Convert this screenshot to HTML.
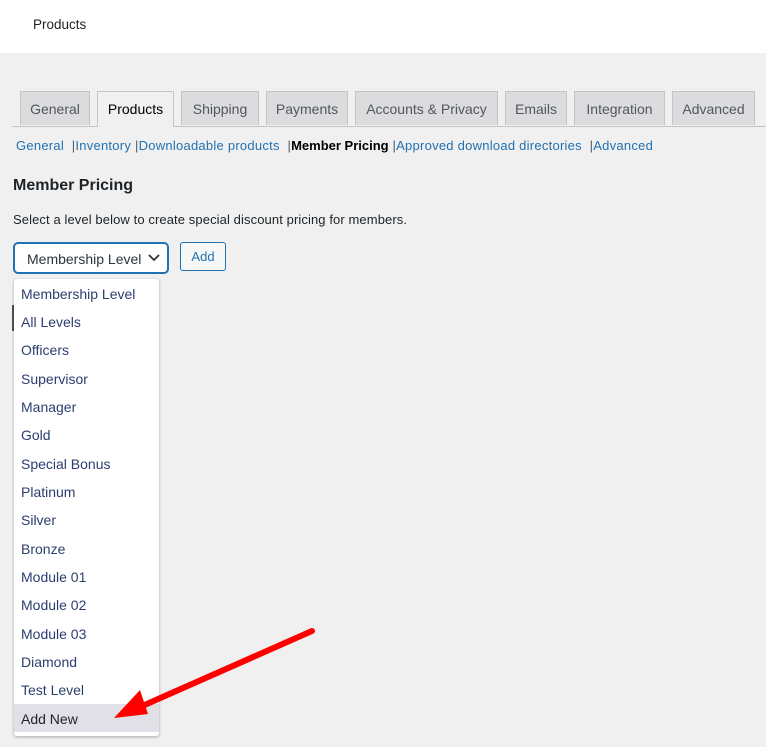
<!DOCTYPE html>
<html><head><style>
body{margin:0;width:766px;height:747px;background:#f0f0f1;font-family:"Liberation Sans",sans-serif;font-size:13px;color:#1d2327;position:relative;overflow:hidden}
.hdr{position:absolute;left:0;top:0;width:766px;height:53px;background:#fff}
.hdr span{position:absolute;left:33px;top:17px;font-size:13.5px}
.tabline{position:absolute;left:12px;right:0;top:126px;height:1px;background:#c3c4c7}
.tab{position:absolute;top:91px;height:34px;background:#dcdcde;border:1px solid #c3c4c7;border-bottom:none;box-sizing:border-box;font-size:14px;color:#50575e;text-align:center;line-height:34px}
.tab.a{background:#f0f0f1;color:#000;height:36px}
.sub{position:absolute;top:138px;left:16px;font-size:13px;color:#2271b1;white-space:nowrap;letter-spacing:0.25px}
.sub b{color:#000;letter-spacing:0}
.sub i{font-style:normal;color:#50575e}
h2{position:absolute;left:13px;top:177px;margin:0;font-size:16px;font-weight:bold}
.desc{position:absolute;left:13px;top:212px;letter-spacing:0.1px}
.sel{position:absolute;left:14px;top:243px;width:154px;height:30px;box-sizing:border-box;border:1px solid #2271b1;border-radius:4px;box-shadow:0 0 0 1px #2271b1;background:#fff;color:#2c3338;font-size:14px;line-height:30px;padding-left:12px}
.sel svg{position:absolute;right:7px;top:10px}
.btn{position:absolute;left:180px;top:242px;width:46px;height:29px;box-sizing:border-box;border:1px solid #2271b1;border-radius:3px;color:#2271b1;font-size:13px;text-align:center;line-height:27px;background:#f6f7f7}
.list{position:absolute;left:14px;top:279px;width:145px;height:457px;background:#fff;border-radius:3px;box-shadow:0 1px 3px rgba(0,0,0,.3)}
.it{position:absolute;left:7px;font-size:14px;color:#2c3e6e}
.hl{position:absolute;left:0;top:425px;width:145px;height:28px;background:#e0e0e6}
</style></head><body>
<div class="hdr"><span>Products</span></div>
<div class="tabline"></div>
<div class="tab" style="left:20px;width:70px">General</div>
<div class="tab a" style="left:97px;width:77px">Products</div>
<div class="tab" style="left:181px;width:78px">Shipping</div>
<div class="tab" style="left:266px;width:82px">Payments</div>
<div class="tab" style="left:355px;width:143px">Accounts &amp; Privacy</div>
<div class="tab" style="left:505px;width:62px">Emails</div>
<div class="tab" style="left:574px;width:91px">Integration</div>
<div class="tab" style="left:672px;width:83px">Advanced</div>
<div class="sub">General &nbsp;<i>|</i>Inventory <i>|</i>Downloadable products &nbsp;<i>|</i><b>Member Pricing</b> <i>|</i>Approved download directories &nbsp;<i>|</i>Advanced</div>
<h2>Member Pricing</h2>
<div class="desc">Select a level below to create special discount pricing for members.</div>
<div class="sel">Membership Level<svg width="12" height="8" viewBox="0 0 12 8"><path d="M1 1l5 5 5-5" fill="none" stroke="#2c3338" stroke-width="1.8"/></svg></div>
<div class="btn">Add</div>
<div style="position:absolute;left:12px;top:305px;width:2px;height:26px;background:#50575e"></div>
<div class="list">
<div class="hl"></div>
<div class="it" style="top:7px">Membership Level</div>
<div class="it" style="top:35px">All Levels</div>
<div class="it" style="top:63px">Officers</div>
<div class="it" style="top:92px">Supervisor</div>
<div class="it" style="top:120px">Manager</div>
<div class="it" style="top:148px">Gold</div>
<div class="it" style="top:177px">Special Bonus</div>
<div class="it" style="top:205px">Platinum</div>
<div class="it" style="top:233px">Silver</div>
<div class="it" style="top:262px">Bronze</div>
<div class="it" style="top:290px">Module 01</div>
<div class="it" style="top:318px">Module 02</div>
<div class="it" style="top:347px">Module 03</div>
<div class="it" style="top:375px">Diamond</div>
<div class="it" style="top:403px">Test Level</div>
<div class="it" style="top:432px;color:#1d2327">Add New</div>
</div>
<svg style="position:absolute;left:0;top:0" width="766" height="747">
<line x1="312" y1="631" x2="140" y2="707" stroke="#f00" stroke-width="6" stroke-linecap="round"/>
<polygon points="114,718 140,690 148,714" fill="#f00"/>
</svg>
</body></html>
